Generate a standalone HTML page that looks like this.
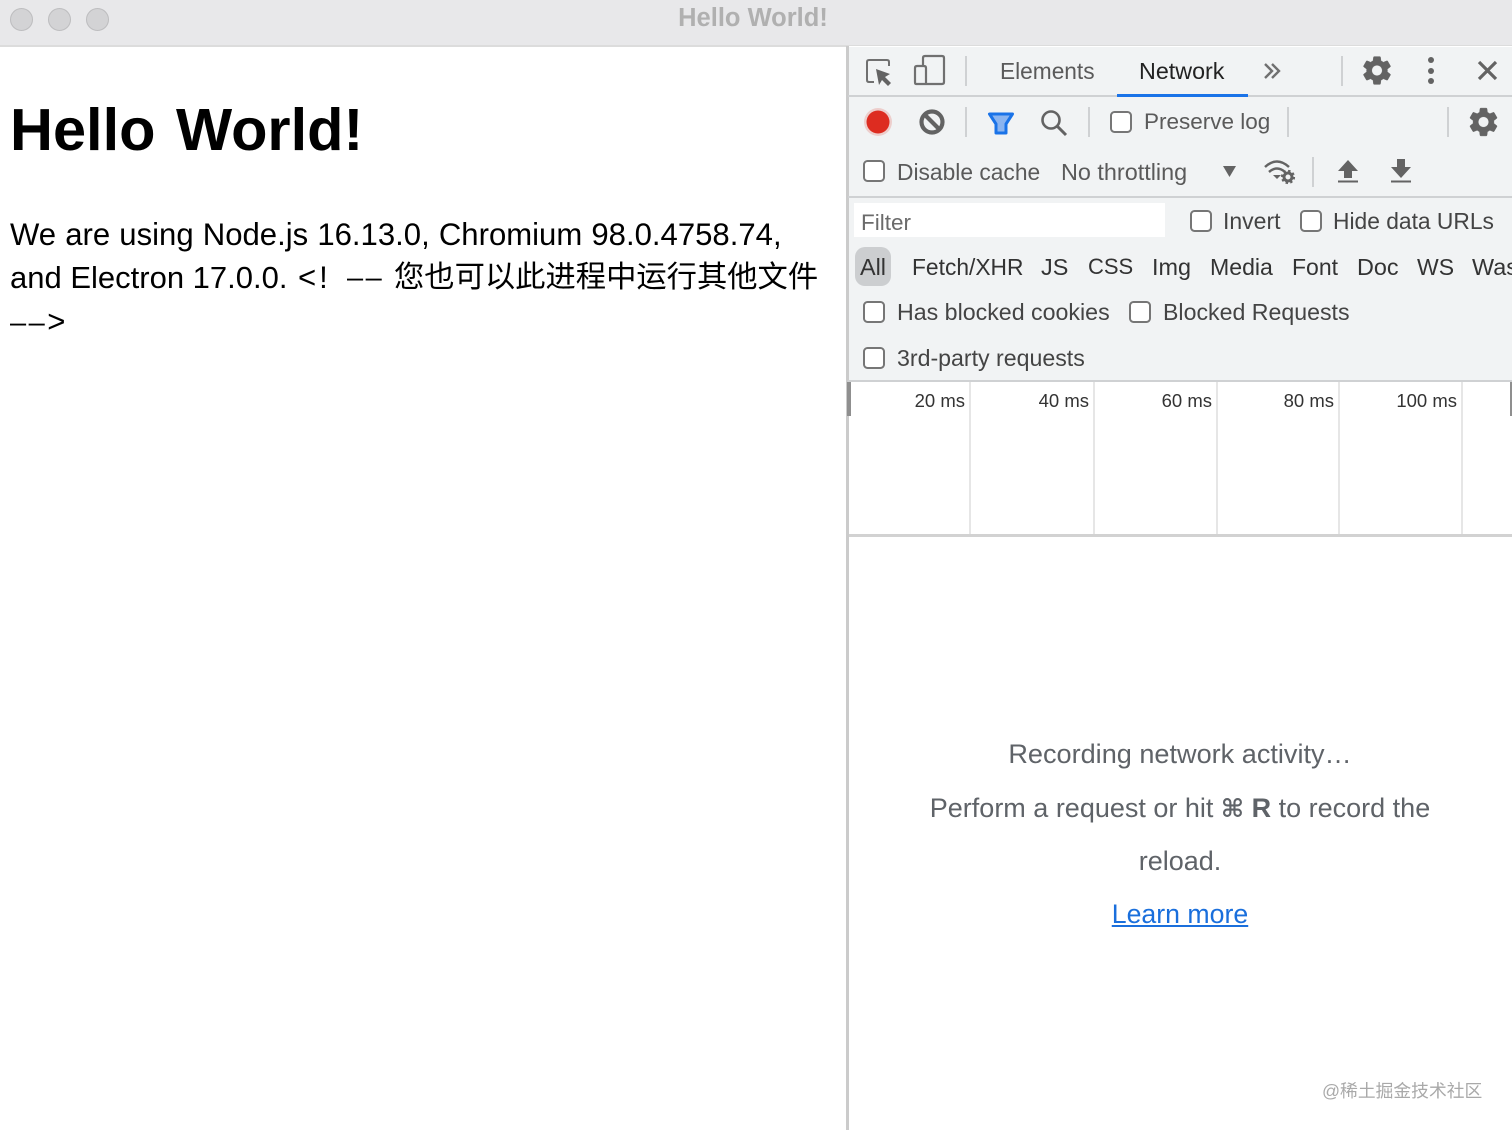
<!DOCTYPE html>
<html lang="en"><head><meta charset="utf-8"><title>Hello World!</title>
<style>
html,body{margin:0;padding:0;width:1512px;height:1130px;overflow:hidden;background:#fff;font-family:"Liberation Sans","Noto Sans CJK SC",sans-serif}
.a{position:absolute}
.t{position:absolute;white-space:nowrap;line-height:30px;font-size:23.4px;color:#5a5a5a}
.p{position:absolute;white-space:nowrap;line-height:44px;font-size:31.1px;color:#000}
.c{position:absolute;width:22px;height:22px;box-sizing:border-box;border:2px solid #767676;border-radius:4.500px;background:#fff}
.l{position:absolute;background:#cfd1d3}
.m{position:absolute;white-space:nowrap;font-size:18.500px;line-height:24px;color:#333;top:389px;text-align:right;width:80px}
.v{position:absolute;width:2px;top:382px;height:152px;background:#e6e6e6}
.e{position:absolute;left:848px;width:664px;text-align:center;font-size:27px;line-height:36px;color:#5f6368;white-space:nowrap}
.d{position:absolute;top:7.500px;width:23px;height:23px;box-sizing:border-box;border-radius:50%;background:#d3d3d5;border:1px solid #bdbdbf}
.dash{display:inline-block;width:16px;height:2.500px;background:#000;position:absolute}
</style></head><body>
<div class="a" style="left:0;top:0;width:1512px;height:45px;background:#e8e8ea;border-bottom:2px solid #dcdcdc"></div>
<div class="d" style="left:9.500px"></div><div class="d" style="left:47.500px"></div><div class="d" style="left:85.500px"></div>
<div class="t" style="left:0;width:1506px;text-align:center;top:3px;font-weight:bold;font-size:25.500px;color:#b0b0b0">Hello World!</div>

<div class="t" style="left:10px;top:92px;line-height:76px;font-size:59.500px;font-weight:bold;color:#000;word-spacing:4px">Hello World!</div>
<div class="p" style="left:10px;top:213px;word-spacing:.5px">We are using Node.js 16.13.0, Chromium 98.0.4758.74,</div>
<div class="p" style="left:10px;top:256px;font-size:31px">and Electron 17.0.0.</div>
<div class="p" style="left:298px;top:256px;letter-spacing:3px">&lt;!</div>
<div class="p" style="left:347px;top:256px;font-size:29px;letter-spacing:2.500px">––</div>
<div class="p" style="left:394px;top:256px;font-size:30.300px">您也可以此进程中运行其他文件</div>
<div class="p" style="left:10px;top:300px;font-size:29px;letter-spacing:2.500px">––<span style="font-size:31.100px;letter-spacing:0">&gt;</span></div>

<div class="a" style="left:846px;top:46px;width:666px;height:1084px;background:#fff;border-left:3px solid #cbcbcb;box-sizing:border-box"></div>
<div class="a" style="left:849px;top:47px;width:663px;height:334px;background:#f1f3f4"></div>
<div class="l" style="left:848px;top:95px;width:664px;height:2px"></div>
<div class="a" style="left:1117px;top:94px;width:131px;height:3px;background:#1a73e8"></div>
<div class="l" style="left:848px;top:196px;width:664px;height:2px"></div>
<div class="l" style="left:848px;top:380px;width:664px;height:2px"></div>
<div class="l" style="left:965px;top:56px;width:2px;height:30px"></div>
<div class="l" style="left:1341px;top:56px;width:2px;height:30px"></div>
<div class="l" style="left:965px;top:107px;width:2px;height:30px"></div>
<div class="l" style="left:1088px;top:107px;width:2px;height:30px"></div>
<div class="l" style="left:1287px;top:107px;width:2px;height:30px"></div>
<div class="l" style="left:1447px;top:107px;width:2px;height:30px"></div>
<div class="l" style="left:1312px;top:157px;width:2px;height:30px"></div>

<svg class="a" style="left:846px;top:46px" width="666" height="150" viewBox="846 46 666 150">
<path d="M874 82h-5q-2 0-2-2V62q0-2 2-2h18q2 0 2 2v4" fill="none" stroke="#707070" stroke-width="2"/>
<path d="M876 69l14 5-5 3 6 6-3 3-6-6-3 5z" fill="#636363"/>
<path d="M923 66v-8q0-2 2-2h17q2 0 2 2v24q0 2-2 2h-26q-1 0-1-2V68q0-2 2-2h7q2 0 2 2v16" fill="none" stroke="#707070" stroke-width="2.200"/>
<circle cx="878" cy="122" r="14" fill="#e58a80" opacity=".35"/><circle cx="878" cy="122" r="11.500" fill="#dd2c20"/>
<circle cx="932" cy="122" r="10.500" fill="none" stroke="#636363" stroke-width="4.200"/><path d="M925 115l14 14" stroke="#636363" stroke-width="4.200"/>
<path d="M989.500 114H1012.500L1006 124V133H996V124Z" fill="#8ab4f0" stroke="#1a73e8" stroke-width="3" stroke-linejoin="round"/>
<circle cx="1051" cy="120" r="8.500" fill="none" stroke="#636363" stroke-width="2.600"/><path d="M1057 126l9 9" stroke="#636363" stroke-width="3"/>
<path d="M1265 64l7 7-7 7M1272 64l7 7-7 7" fill="none" stroke="#707070" stroke-width="2.400"/>
<g fill="#636363" stroke="#636363" stroke-width=".3" transform="translate(1359.600 53.100) scale(1.450)"><path d="M19.140 12.940c.04-.3.06-.61.06-.94 0-.32-.02-.64-.07-.94l2.030-1.580c.18-.14.23-.41.12-.61l-1.920-3.320c-.12-.22-.37-.29-.59-.22l-2.390.96c-.5-.38-1.030-.7-1.620-.94l-.36-2.540c-.04-.24-.24-.41-.48-.41h-3.840c-.24 0-.43.17-.47.41l-.36 2.540c-.59.24-1.130.57-1.620.94l-2.390-.96c-.22-.08-.47 0-.59.22L2.740 8.870c-.12.21-.08.47.12.61l2.030 1.580c-.05.3-.09.63-.09.94s.02.64.07.94l-2.030 1.580c-.18.14-.23.41-.12.61l1.920 3.320c.12.22.37.29.59.22l2.390-.96c.5.38 1.030.7 1.620.94l.36 2.540c.05.24.24.41.48.41h3.840c.24 0 .44-.17.47-.41l.36-2.540c.59-.24 1.130-.56 1.620-.94l2.390.96c.22.08.47 0 .59-.22l1.920-3.320c.12-.22.07-.47-.12-.61l-2.010-1.580zM12 15.600c-1.980 0-3.600-1.620-3.600-3.600s1.620-3.600 3.600-3.600 3.600 1.620 3.600 3.600-1.620 3.600-3.600 3.600z"/></g>
<g fill="#636363" stroke="#636363" stroke-width=".3" transform="translate(1466.100 104.600) scale(1.450)"><path d="M19.140 12.940c.04-.3.06-.61.06-.94 0-.32-.02-.64-.07-.94l2.030-1.580c.18-.14.23-.41.12-.61l-1.920-3.320c-.12-.22-.37-.29-.59-.22l-2.390.96c-.5-.38-1.030-.7-1.620-.94l-.36-2.540c-.04-.24-.24-.41-.48-.41h-3.840c-.24 0-.43.17-.47.41l-.36 2.540c-.59.24-1.130.57-1.620.94l-2.390-.96c-.22-.08-.47 0-.59.22L2.740 8.870c-.12.21-.08.47.12.61l2.030 1.580c-.05.3-.09.63-.09.94s.02.64.07.94l-2.030 1.580c-.18.14-.23.41-.12.61l1.920 3.320c.12.22.37.29.59.22l2.390-.96c.5.38 1.030.7 1.620.94l.36 2.540c.05.24.24.41.48.41h3.840c.24 0 .44-.17.47-.41l.36-2.540c.59-.24 1.130-.56 1.620-.94l2.390.96c.22.08.47 0 .59-.22l1.920-3.320c.12-.22.07-.47-.12-.61l-2.010-1.580zM12 15.600c-1.980 0-3.600-1.620-3.600-3.600s1.620-3.600 3.600-3.600 3.600 1.620 3.600 3.600-1.620 3.600-3.600 3.600z"/></g>
<circle cx="1431" cy="60" r="3" fill="#636363"/><circle cx="1431" cy="71" r="3" fill="#636363"/><circle cx="1431" cy="81" r="3" fill="#636363"/>
<path d="M1479 62l17 17M1496 62l-17 17" stroke="#636363" stroke-width="3.200"/>
<path d="M1223 166h13l-6.500 11z" fill="#636363"/>
<path d="M1265 167q12-11 24 0M1269 172q8-7 16 0" fill="none" stroke="#636363" stroke-width="2.500"/><path d="M1273 175h8l-4 4z" fill="#636363"/>
<circle cx="1288" cy="177" r="4" fill="none" stroke="#636363" stroke-width="3"/><circle cx="1288" cy="177" r="6" fill="none" stroke="#636363" stroke-width="2.200" stroke-dasharray="2.400 2.300"/>
<path d="M1348 160l10 11h-6v7h-8v-7h-6z" fill="#636363"/><path d="M1338 181.500h20" stroke="#636363" stroke-width="2"/>
<path d="M1397 159h8v8h6l-10 11-10-11h6z" fill="#636363"/><path d="M1391 181.500h20" stroke="#636363" stroke-width="2"/>
</svg>

<div class="t" style="left:1000px;top:56px;font-size:22.700px">Elements</div>
<div class="t" style="left:1139px;top:56px;color:#222;font-size:23.300px">Network</div>

<div class="c" style="left:1110px;top:111px"></div>
<div class="t" style="left:1144px;top:107px;font-size:22.500px">Preserve log</div>
<div class="c" style="left:863px;top:160px"></div>
<div class="t" style="left:897px;top:157px;font-size:22.800px">Disable cache</div>
<div class="t" style="left:1061px;top:157px">No throttling</div>

<div class="a" style="left:854px;top:203px;width:311px;height:34px;background:#fff"></div>
<div class="t" style="left:861px;top:208px;color:#6b6b6b;font-size:22.500px">Filter</div>
<div class="c" style="left:1190px;top:210px"></div>
<div class="t" style="left:1223px;top:206px;color:#444;font-size:23px">Invert</div>
<div class="c" style="left:1300px;top:210px"></div>
<div class="t" style="left:1333px;top:206px;color:#444;font-size:22.800px">Hide data URLs</div>

<div class="a" style="left:855px;top:247px;width:36px;height:39px;border-radius:10px;background:#ccced0"></div>
<div class="t" style="left:860px;top:252px;color:#333">All</div>
<div class="t" style="left:912px;top:252px;color:#333;font-size:22.800px">Fetch/XHR</div>
<div class="t" style="left:1041px;top:252px;color:#333">JS</div>
<div class="t" style="left:1088px;top:252px;color:#333;font-size:22px">CSS</div>
<div class="t" style="left:1152px;top:252px;color:#333">Img</div>
<div class="t" style="left:1210px;top:252px;color:#333;font-size:23.100px">Media</div>
<div class="t" style="left:1292px;top:252px;color:#333;font-size:23px">Font</div>
<div class="t" style="left:1357px;top:252px;color:#333">Doc</div>
<div class="t" style="left:1417px;top:252px;color:#333;font-size:23px">WS</div>
<div class="t" style="left:1472px;top:252px;color:#333">Wasm</div>

<div class="c" style="left:863px;top:301px"></div>
<div class="t" style="left:897px;top:297px;color:#444;font-size:23.200px">Has blocked cookies</div>
<div class="c" style="left:1129px;top:301px"></div>
<div class="t" style="left:1163px;top:297px;color:#444;font-size:23.150px">Blocked Requests</div>
<div class="c" style="left:863px;top:347px"></div>
<div class="t" style="left:897px;top:343px;color:#444;font-size:23.150px">3rd-party requests</div>

<div class="a" style="left:847px;top:382px;width:4px;height:34px;background:#8f8f8f"></div>
<div class="a" style="left:1510px;top:382px;width:2px;height:34px;background:#8f8f8f"></div>
<div class="v" style="left:969px"></div><div class="v" style="left:1093px"></div><div class="v" style="left:1216px"></div><div class="v" style="left:1338px"></div><div class="v" style="left:1461px"></div>
<div class="m" style="left:885px">20 ms</div>
<div class="m" style="left:1009px">40 ms</div>
<div class="m" style="left:1132px">60 ms</div>
<div class="m" style="left:1254px">80 ms</div>
<div class="m" style="left:1377px">100 ms</div>
<div class="l" style="left:849px;top:534px;width:663px;height:3px;background:#d2d2d2"></div>

<div class="e" style="top:736px;font-size:27.100px">Recording network activity…</div>
<div class="e" style="top:790px">Perform a request or hit <span style="font-family:'DejaVu Sans',sans-serif;font-weight:bold;font-size:25px">⌘</span> <b>R</b> to record the</div>
<div class="e" style="top:843px">reload.</div>
<div class="e" style="top:896px;color:#1a6fdc;text-decoration:underline;font-size:26.700px">Learn more</div>
<div class="t" style="left:1322px;top:1076px;font-size:17.800px;color:#a9a9a9">@稀土掘金技术社区</div>
</body></html>
